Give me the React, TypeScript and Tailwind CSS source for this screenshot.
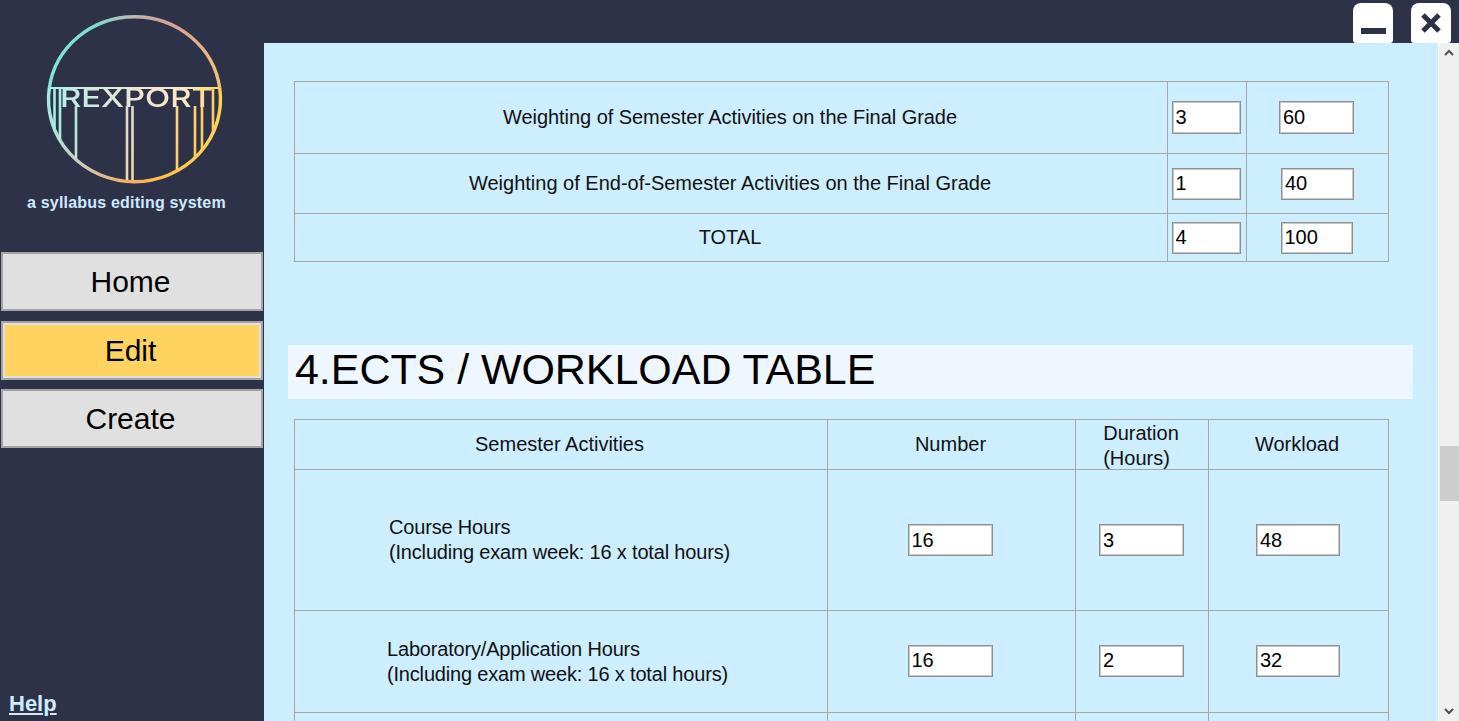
const font = "font-['Liberation_Sans',Arial,sans-serif]";

function Logo() {
  return (
    <svg width="180" height="172" viewBox="45 13 180 172" className="blur-[0.4px]">
      <defs>
        <linearGradient id="top" gradientUnits="userSpaceOnUse" x1="50" y1="70" x2="220" y2="70">
          <stop offset="0" stopColor="#80e6de" />
          <stop offset="0.25" stopColor="#7fdcd5" />
          <stop offset="0.5" stopColor="#bcb6ad" />
          <stop offset="0.75" stopColor="#dc9f8e" />
          <stop offset="1" stopColor="#f2c27a" />
        </linearGradient>
        <linearGradient id="bottom" gradientUnits="userSpaceOnUse" x1="50" y1="100" x2="220" y2="150">
          <stop offset="0" stopColor="#a2ebe4" />
          <stop offset="0.3" stopColor="#cfc8b8" />
          <stop offset="0.55" stopColor="#f1ad62" />
          <stop offset="0.8" stopColor="#ffc945" />
          <stop offset="1" stopColor="#ffd65c" />
        </linearGradient>
        <linearGradient id="band" gradientUnits="userSpaceOnUse" x1="50" y1="97" x2="220" y2="97">
          <stop offset="0" stopColor="#aeefe9" />
          <stop offset="0.5" stopColor="#efe6d4" />
          <stop offset="0.8" stopColor="#ffe7c4" />
          <stop offset="1" stopColor="#ffd65c" />
        </linearGradient>
        <linearGradient id="legs" gradientUnits="userSpaceOnUse" x1="60" y1="100" x2="210" y2="170">
          <stop offset="0" stopColor="#a8ede6" />
          <stop offset="0.45" stopColor="#e4dac8" />
          <stop offset="0.7" stopColor="#ffd67e" />
          <stop offset="1" stopColor="#ffc640" />
        </linearGradient>
      </defs>
      <path d="M49.300 88 A86 82.500 0 0 1 219.700 88" fill="none" stroke="url(#top)" strokeWidth="3.4" />
      <path d="M49.300 88 A86 82.500 0 1 0 219.700 88" fill="none" stroke="url(#bottom)" strokeWidth="3.4" />
      <path d="M50 88 H219" fill="none" stroke="url(#band)" strokeWidth="2.2" />
      <text
        x="60"
        y="107"
        textLength="153"
        lengthAdjust="spacingAndGlyphs"
        fontFamily="Inter, 'Liberation Sans', sans-serif"
        fontWeight="500"
        fontSize="26"
        fill="url(#band)"
      >
        REXPORT
      </text>
      <path
        d="M54.500 88 V129 M60 88 V140 M76 106 V159 M127 106 V180 M132.500 106 V180 M177 106 V170 M195 106 V157 M202 106 V150 M213 88 V132"
        fill="none"
        stroke="url(#legs)"
        strokeWidth="2.6"
      />
    </svg>
  );
}

function NavButton({ label, active }: { label: string; active?: boolean }) {
  return (
    <div className="h-[59px] w-[262px] ml-px border-2 border-[#a3a3a3] bg-[#e0e0e0] p-[2px] flex">
      <div className={`flex-1 flex items-center justify-center pr-[3px] text-[30px] text-black ${active ? "bg-[#ffd35f]" : ""}`}>
        {label}
      </div>
    </div>
  );
}

function Box({ value, w, h = "h-[33px]", shift = "" }: { value: string; w: string; h?: string; shift?: string }) {
  return (
    <input
      readOnly
      value={value}
      className={`${w} ${h} ${shift} box-border border border-[#8f8f8f] shadow-[inset_0_0_0_1px_#c8c8c8] bg-white pl-[3px] text-[20px] text-black outline-none align-middle ${font}`}
    />
  );
}

const cell = "border border-[#a6a6a6] p-0 align-middle text-center font-normal";

export default function App() {
  return (
    <div className={`w-[1459px] h-[721px] overflow-hidden flex bg-[#2d3249] text-[20px] leading-[25px] text-[#111] ${font}`}>
      <aside className="w-[264px] shrink-0 flex flex-col">
        <div className="pt-[13px] pl-[45px] h-[191px]">
          <Logo />
        </div>
        <p className="pl-[27px] pt-[3px] h-[61px] text-[16px] leading-[18px] font-bold tracking-[0.2px] text-[#cdeaff]">
          a syllabus editing system
        </p>
        <nav className="flex flex-col gap-[9.5px]">
          <NavButton label="Home" />
          <NavButton label="Edit" active />
          <NavButton label="Create" />
        </nav>
        <a className="mt-auto mb-[5px] ml-[9px] text-[22px] leading-[24px] font-bold underline text-[#cdeaff]">Help</a>
      </aside>

      <div className="flex-1 min-w-0 flex flex-col">
        <header className="h-[43px] shrink-0 flex justify-end items-end gap-[18px] pr-[8px]">
          <div className="w-[40px] h-[40px] rounded-t-[8px] rounded-b-[3px] bg-white flex items-end justify-center pb-[9px]">
            <div className="w-[25px] h-[6px] bg-[#2d3249]" />
          </div>
          <div className="w-[40px] h-[40px] rounded-t-[8px] rounded-b-[3px] bg-white flex items-center justify-center">
            <svg width="22" height="22" viewBox="0 0 22 22">
              <path d="M3 3 L19 19 M19 3 L3 19" stroke="#2d3249" strokeWidth="5" />
            </svg>
          </div>
        </header>

        <div className="flex-1 min-h-0 flex">
          <main className="flex-1 min-w-0 overflow-hidden bg-[#cceeff] pt-[38px] pl-[24px]">
            <div className="ml-[6px] w-[1094px]">
              <table className="w-[1094px] table-fixed border-collapse">
                <colgroup>
                  <col className="w-[873px]" />
                  <col className="w-[79px]" />
                  <col className="w-[142px]" />
                </colgroup>
                <tbody>
                  <tr className="h-[72px]">
                    <td className={`${cell} pr-[2px]`}><span className="tracking-[-0.05px]">Weighting of Semester Activities on the Final Grade</span></td>
                    <td className={cell}><Box value="3" w="w-[69px]" shift="mr-[2px]" /></td>
                    <td className={cell}><Box value="60" w="w-[75px]" shift="mr-[2px]" /></td>
                  </tr>
                  <tr className="h-[60px]">
                    <td className={`${cell} pr-[2px]`}>Weighting of End-of-Semester Activities on the Final Grade</td>
                    <td className={cell}><Box value="1" w="w-[69px]" h="h-[32px]" shift="mr-[2px]" /></td>
                    <td className={cell}><Box value="40" w="w-[73px]" h="h-[32px]" /></td>
                  </tr>
                  <tr className="h-[48px]">
                    <td className={`${cell} pr-[2px]`}>TOTAL</td>
                    <td className={cell}><Box value="4" w="w-[69px]" h="h-[32px]" shift="mr-[2px]" /></td>
                    <td className={cell}><Box value="100" w="w-[72px]" h="h-[32px]" shift="mr-[2px]" /></td>
                  </tr>
                </tbody>
              </table>
            </div>

            <h2 className="mt-[83px] w-[1125px] h-[54px] bg-[#eef7ff] pl-[7px] text-[43px] leading-[48px] tracking-[-0.05px] font-normal text-black">
              4.ECTS / WORKLOAD TABLE
            </h2>

            <div className="ml-[6px] mt-[20px] w-[1094px]">
              <table className="w-[1094px] table-fixed border-collapse">
                <colgroup>
                  <col className="w-[533px]" />
                  <col className="w-[248px]" />
                  <col className="w-[133px]" />
                  <col className="w-[180px]" />
                </colgroup>
                <tbody>
                  <tr className="h-[50px]">
                    <td className={`${cell} pr-[3px]`}>Semester Activities</td>
                    <td className={`${cell} pr-[2px]`}>Number</td>
                    <td className={`${cell} pr-[2px]`}>
                      <div className="h-[48px] flex justify-center">
                        <div className="text-left">Duration<br />(Hours)</div>
                      </div>
                    </td>
                    <td className={`${cell} pr-[3px]`}>Workload</td>
                  </tr>
                  <tr className="h-[141px]">
                    <td className={`${cell} !text-left pl-[94px]`}>
                      <span className="tracking-[-0.18px]">Course Hours<br />(Including exam week: 16 x total hours)</span>
                    </td>
                    <td className={cell}><Box value="16" w="w-[85px]" h="h-[32px]" shift="mr-[3px]" /></td>
                    <td className={cell}><Box value="3" w="w-[85px]" h="h-[32px]" shift="mr-px" /></td>
                    <td className={cell}><Box value="48" w="w-[84px]" h="h-[32px]" shift="mr-px" /></td>
                  </tr>
                  <tr className="h-[102px]">
                    <td className={`${cell} !text-left pl-[92px]`}>
                      <span className="tracking-[-0.18px]">Laboratory/Application Hours<br />(Including exam week: 16 x total hours)</span>
                    </td>
                    <td className={cell}><Box value="16" w="w-[85px]" h="h-[32px]" shift="mr-[3px] mb-[2px]" /></td>
                    <td className={cell}><Box value="2" w="w-[85px]" h="h-[32px]" shift="mr-px mb-[2px]" /></td>
                    <td className={cell}><Box value="32" w="w-[84px]" h="h-[32px]" shift="mr-px mb-[2px]" /></td>
                  </tr>
                  <tr className="h-[100px]">
                    <td className={cell} />
                    <td className={cell} />
                    <td className={cell} />
                    <td className={cell} />
                  </tr>
                </tbody>
              </table>
            </div>
          </main>

          <div className="w-[21px] shrink-0 bg-[#f0f0f0] border-l border-white flex flex-col items-center">
            <svg width="12" height="8" viewBox="0 0 12 8" className="mt-[6px]">
              <path d="M2 6 L6 2 L10 6" fill="none" stroke="#505050" strokeWidth="2" />
            </svg>
            <div className="mt-[389px] w-[19px] h-[55px] bg-[#cdcdcd]" />
            <svg width="12" height="8" viewBox="0 0 12 8" className="mt-auto mb-[6px]">
              <path d="M2 2 L6 6 L10 2" fill="none" stroke="#505050" strokeWidth="2" />
            </svg>
          </div>
        </div>
      </div>
    </div>
  );
}
